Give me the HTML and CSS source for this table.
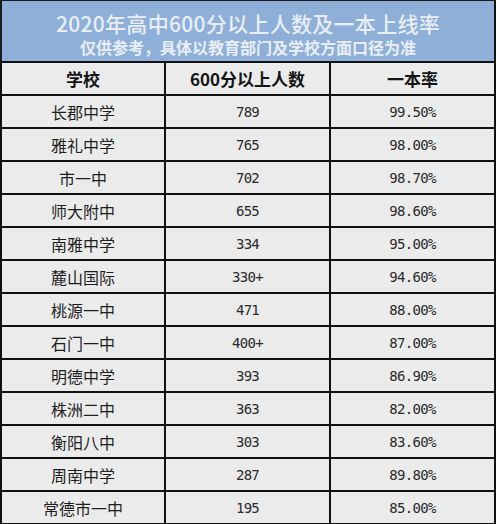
FILE: index.html
```html
<!DOCTYPE html>
<html lang="zh-CN">
<head>
<meta charset="utf-8">
<link rel="stylesheet" href="styles.css">
</head>
<body>
<div class="sheet">
  <div class="banner">
    <div class="title">2020年高中600分以上人数及一本上线率</div>
    <div class="subtitle">仅供参考，具体以教育部门及学校方面口径为准</div>
  </div>
  <div class="grid">
    <div class="cell head">学校</div><div class="cell head">600分以上人数</div><div class="cell head">一本率</div>
    <div class="cell name">长郡中学</div><div class="cell num">789</div><div class="cell num">99.50%</div>
    <div class="cell name">雅礼中学</div><div class="cell num">765</div><div class="cell num">98.00%</div>
    <div class="cell name">市一中</div><div class="cell num">702</div><div class="cell num">98.70%</div>
    <div class="cell name">师大附中</div><div class="cell num">655</div><div class="cell num">98.60%</div>
    <div class="cell name">南雅中学</div><div class="cell num">334</div><div class="cell num">95.00%</div>
    <div class="cell name">麓山国际</div><div class="cell num">330+</div><div class="cell num">94.60%</div>
    <div class="cell name">桃源一中</div><div class="cell num">471</div><div class="cell num">88.00%</div>
    <div class="cell name">石门一中</div><div class="cell num">400+</div><div class="cell num">87.00%</div>
    <div class="cell name">明德中学</div><div class="cell num">393</div><div class="cell num">86.90%</div>
    <div class="cell name">株洲二中</div><div class="cell num">363</div><div class="cell num">82.00%</div>
    <div class="cell name">衡阳八中</div><div class="cell num">303</div><div class="cell num">83.60%</div>
    <div class="cell name">周南中学</div><div class="cell num">287</div><div class="cell num">89.80%</div>
    <div class="cell name">常德市一中</div><div class="cell num">195</div><div class="cell num">85.00%</div>
  </div>
</div>
</body>
</html>
```
FILE: styles.css
```css
html, body {
  margin: 0;
  padding: 0;
  background: #ebebeb;
}
.sheet {
  width: 496px;
  height: 524px;
  box-sizing: border-box;
  border-top: 1px solid #1c1c1c;
  border-right: 2px solid #111;
  border-bottom: 1px solid #111;
  background: #ebebeb;
  font-family: "Noto Sans CJK SC", sans-serif;
  color: #1a1a1a;
  overflow: hidden;
}
.banner {
  height: 60px;
  box-sizing: border-box;
  border-left: 2px solid #1c1c1c;
  background: #8eb0d8;
  display: flex;
  flex-direction: column;
  align-items: center;
  padding-top: 11px;
  color: #e9eef6;
}
.title {
  font-size: 21px;
  line-height: 22px;
  font-weight: 500;
  letter-spacing: 0.3px;
}
.subtitle {
  font-size: 16px;
  line-height: 18px;
  font-weight: 700;
  margin-top: 4px;
}
.grid {
  display: grid;
  grid-template-columns: 164px 165px 165px;
  grid-auto-rows: 33px;
}
.cell {
  box-sizing: border-box;
  border-left: 2px solid #111;
  border-top: 2px solid #111;
  display: flex;
  align-items: center;
  justify-content: center;
  font-size: 16px;
}
.head {
  font-weight: 700;
  font-size: 17px;
  color: #151515;
}
.name {
  font-weight: 400;
  color: #1e1e1e;
}
.num {
  font-family: "DejaVu Sans Mono", monospace;
  font-size: 14px;
  letter-spacing: -0.7px;
  color: #2a2a2a;
}
```
